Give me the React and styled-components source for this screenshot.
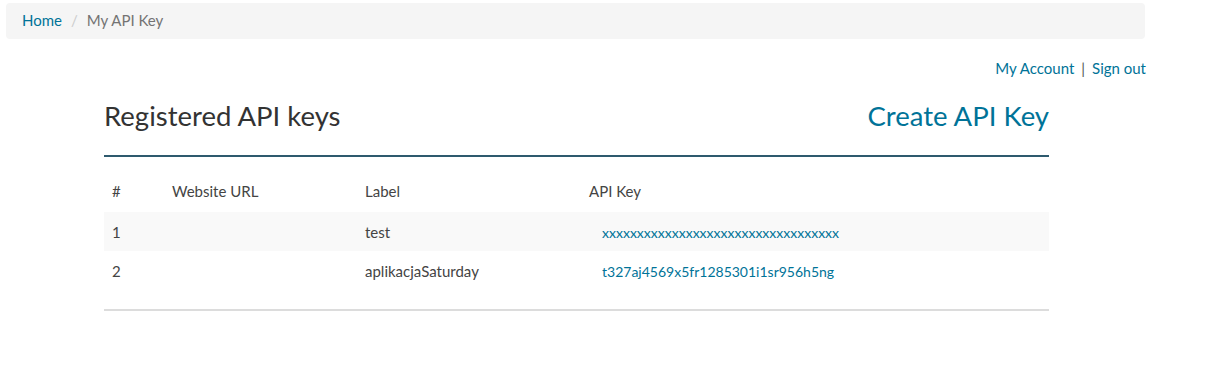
import React from "react"
import styled, { createGlobalStyle } from "styled-components"

const GlobalStyle = createGlobalStyle`
  body {
    margin: 0;
    background: #fff;
    font-family: "Lato", "Open Sans", sans-serif;
    color: #333;
  }
`

const teal = "#007398"

export const Breadcrumb = styled.ol`
  list-style: none;
  margin: 3px 65px 0 6px;
  padding: 0 16px 2px;
  height: 34px;
  display: flex;
  align-items: center;
  background: #f5f5f5;
  border-radius: 4px;
  font-size: 15px;
`
export const Crumb = styled.li`
  color: ${(p) => (p.$active ? "#737373" : teal)};
  &:not(:first-child)::before {
    content: "/";
    color: #ccc;
    padding: 0 9px;
  }
`
export const AccountBar = styled.div`
  display: flex;
  justify-content: flex-end;
  align-items: center;
  margin: 20px 64px 0 0;
  font-size: 15px;
  color: ${teal};
`
export const Pipe = styled.span`
  color: #555;
  padding: 0 7px;
`
export const Link = styled.a`
  color: ${teal};
  text-decoration: none;
`
export const Panel = styled.div`
  width: 945px;
  margin: 6px 0 0 104px;
`
export const PanelHead = styled.div`
  display: flex;
  justify-content: space-between;
  align-items: center;
  height: 64px;
  padding-bottom: 8px;
  border-bottom: 2px solid #2e5a6e;
`
export const Title = styled.h2`
  margin: 0;
  font-size: 27.5px;
  font-weight: 400;
  color: #333;
`
export const CreateLink = styled(Link)`
  font-size: 27.5px;
`
export const Table = styled.table`
  width: 100%;
  border-collapse: collapse;
  margin-top: 13px;
  font-size: 15px;
  color: #444;
`
export const Th = styled.th`
  text-align: left;
  font-weight: 400;
  padding: 0 8px;
  height: 42px;
  width: ${(p) => p.$w || "auto"};
`
export const Tr = styled.tr`
  background: ${(p) => (p.$striped ? "#f9f9f9" : "transparent")};
`
export const Td = styled.td`
  padding: 0 8px;
  height: 39px;
`
export const KeyLink = styled(Link)`
  padding-left: 13px;
  font-size: 14px;
`
export const PanelFoot = styled.div`
  margin-top: 19px;
  border-bottom: 2px solid #dcdcdc;
`

const keys = [
  { id: 1, url: "", label: "test", key: "xxxxxxxxxxxxxxxxxxxxxxxxxxxxxxxxxx" },
  { id: 2, url: "", label: "aplikacjaSaturday", key: "t327aj4569x5fr1285301i1sr956h5ng" },
]

export default function App() {
  return (
    <>
      <GlobalStyle />
      <Breadcrumb>
        <Crumb>Home</Crumb>
        <Crumb $active>My API Key</Crumb>
      </Breadcrumb>
      <AccountBar>
        <Link href="#">My Account</Link>
        <Pipe>|</Pipe>
        <Link href="#">Sign out</Link>
      </AccountBar>
      <Panel>
        <PanelHead>
          <Title>Registered API keys</Title>
          <CreateLink href="#">Create API Key</CreateLink>
        </PanelHead>
        <Table>
          <thead>
            <tr>
              <Th $w="44px">#</Th>
              <Th $w="177px">Website URL</Th>
              <Th $w="208px">Label</Th>
              <Th>API Key</Th>
            </tr>
          </thead>
          <tbody>
            {keys.map((k, i) => (
              <Tr key={k.id} $striped={i % 2 === 0}>
                <Td>{k.id}</Td>
                <Td>{k.url}</Td>
                <Td>{k.label}</Td>
                <Td>
                  <KeyLink href="#">{k.key}</KeyLink>
                </Td>
              </Tr>
            ))}
          </tbody>
        </Table>
        <PanelFoot />
      </Panel>
    </>
  )
}
